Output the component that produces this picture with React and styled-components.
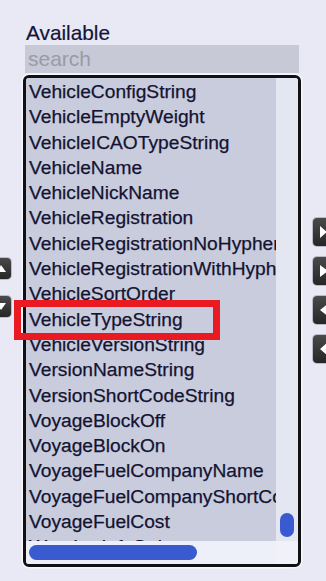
import React from "react";
import styled, { createGlobalStyle } from "styled-components";

const GlobalStyle = createGlobalStyle`
  html, body {
    margin: 0;
    padding: 0;
    background: #e8e9f5;
    overflow: hidden;
    font-family: "Liberation Sans", Arial, sans-serif;
  }
`;

const Layout = styled.div`
  display: flex;
  align-items: flex-start;
  width: 326px;
  height: 581px;
  overflow: hidden;
`;

const LeftRail = styled.div`
  flex: none;
  display: flex;
  flex-direction: column;
  gap: 17px;
  width: 28px;
  margin-left: -17px;
  padding-top: 258px;
`;

const RightRail = styled.div`
  flex: none;
  display: flex;
  flex-direction: column;
  gap: 11px;
  width: 30px;
  margin-left: 12px;
  padding-top: 218px;
`;

const ToolButton = styled.div`
  height: ${(p) => p.$h}px;
  box-sizing: border-box;
  border-radius: 4px;
  background: linear-gradient(#4a4a4a, #262626);
  box-shadow: 0 0 0 1px #b9bbc8;
  display: flex;
  align-items: center;
  justify-content: ${(p) => (p.$side === "left" ? "flex-end" : "flex-start")};
  padding: ${(p) => (p.$side === "left" ? "0 2px 0 0" : "0 0 0 7px")};
`;

const Panel = styled.div`
  position: relative;
  flex: none;
  width: 278px;
  margin-left: 12px;
  padding-top: 21px;
  display: flex;
  flex-direction: column;
`;

const Label = styled.div`
  font-size: 20.8px;
  line-height: 23px;
  color: #15153a;
  padding-left: 3px;
  -webkit-text-stroke: 0.2px #15153a;
`;

const Search = styled.input`
  margin: 1px 2px 0 2px;
  height: 28px;
  box-sizing: border-box;
  border: none;
  outline: none;
  background: #c7c9d7;
  font-family: "Liberation Sans", Arial, sans-serif;
  font-size: 21px;
  padding: 0 3px;
  color: #15153a;
  &::placeholder {
    color: #9a9ba6;
  }
`;

const ListBox = styled.div`
  margin-top: 2px;
  height: 492px;
  box-sizing: border-box;
  border: 3px solid #111114;
  border-radius: 6px;
  box-shadow: 0 0 0 1.5px #f6f7fc;
  overflow: hidden;
  display: grid;
  grid-template-columns: 250px 22px;
  grid-template-rows: 463px 23px;
`;

const Items = styled.div`
  overflow: hidden;
  background: #c9ccdc;
  padding-top: 1px;
`;

const Item = styled.div`
  font-size: 19.2px;
  line-height: 25.3px;
  height: 25.3px;
  white-space: nowrap;
  padding-left: 3px;
  color: #131332;
  -webkit-text-stroke: 0.25px #131332;
`;

const VTrack = styled.div`
  background: #e4e6f2;
  display: flex;
  flex-direction: column;
  justify-content: flex-end;
  align-items: center;
  padding-bottom: 4px;
`;

const HTrack = styled.div`
  background: #eef0f9;
  display: flex;
  align-items: center;
  padding-left: 3px;
`;

const Corner = styled.div`
  background: #f1f2f9;
`;

const Thumb = styled.div`
  width: ${(p) => p.$w}px;
  height: ${(p) => p.$h}px;
  border-radius: 8px;
  background: #3a5ad0;
`;

const Callout = styled.div`
  position: absolute;
  left: -9px;
  top: 300px;
  width: 206px;
  height: 40px;
  box-sizing: border-box;
  border: 7px solid #ea1a22;
  pointer-events: none;
`;

const items = [
  "VehicleConfigString",
  "VehicleEmptyWeight",
  "VehicleICAOTypeString",
  "VehicleName",
  "VehicleNickName",
  "VehicleRegistration",
  "VehicleRegistrationNoHyphen",
  "VehicleRegistrationWithHyphen",
  "VehicleSortOrder",
  "VehicleTypeString",
  "VehicleVersionString",
  "VersionNameString",
  "VersionShortCodeString",
  "VoyageBlockOff",
  "VoyageBlockOn",
  "VoyageFuelCompanyName",
  "VoyageFuelCompanyShortCode",
  "VoyageFuelCost",
  "WeatherInfoString",
];

const Icon = ({ kind }) => {
  const shapes = {
    allRight: "M0 1 L7 7 L0 13 Z M7 1 L14 7 L7 13 Z",
    right: "M0 1 L8 7 L0 13 Z",
    left: "M0 7 L9 0 L9 14 Z",
    allLeft: "M0 7 L7 1 L7 13 Z M7 7 L14 1 L14 13 Z",
    up: "M1 10 L6 3 L11 10 Z",
    down: "M1 3 L11 3 L6 10 Z",
  };
  return (
    <svg width="14" height="14" viewBox="0 0 14 14">
      <path d={shapes[kind]} fill="#ffffff" />
    </svg>
  );
};

export default function App() {
  return (
    <>
      <GlobalStyle />
      <Layout>
        <LeftRail>
          <ToolButton $side="left" $h={21}>
            <Icon kind="up" />
          </ToolButton>
          <ToolButton $side="left" $h={21}>
            <Icon kind="down" />
          </ToolButton>
        </LeftRail>
        <Panel>
          <Label>Available</Label>
          <Search placeholder="search" />
          <ListBox>
            <Items>
              {items.map((it) => (
                <Item key={it}>{it}</Item>
              ))}
            </Items>
            <VTrack>
              <Thumb $w={14} $h={24} />
            </VTrack>
            <HTrack>
              <Thumb $w={168} $h={15} />
            </HTrack>
            <Corner />
          </ListBox>
          <Callout />
        </Panel>
        <RightRail>
          <ToolButton $h={28}>
            <Icon kind="allRight" />
          </ToolButton>
          <ToolButton $h={28}>
            <Icon kind="right" />
          </ToolButton>
          <ToolButton $h={28}>
            <Icon kind="left" />
          </ToolButton>
          <ToolButton $h={28}>
            <Icon kind="allLeft" />
          </ToolButton>
        </RightRail>
      </Layout>
    </>
  );
}
